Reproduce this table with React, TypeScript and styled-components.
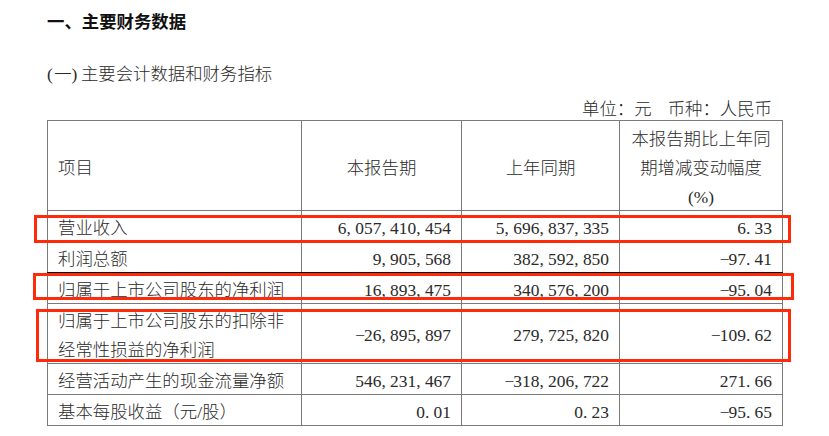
import React from "react";
import styled, { createGlobalStyle } from "styled-components";

const GlobalStyle = createGlobalStyle`
  html, body { margin: 0; padding: 0; background: #fff; }
  body {
    font-family: "Noto Sans CJK SC", sans-serif;
    font-weight: 300;
    color: #2a2a2a;
  }
`;

const Page = styled.div`
  width: 829px;
  height: 436px;
  box-sizing: border-box;
  padding-left: 47px;
  overflow: hidden;
  font-size: 17.4px;
`;

const Title = styled.h1`
  margin: 0;
  font-weight: 700;
  font-size: 17.4px;
  line-height: 42px;
  color: #111;
`;

const Subtitle = styled.div`
  margin-top: 16px;
  line-height: 30px;
`;

const Unit = styled.div`
  margin-top: 8px;
  width: 725px;
  height: 24px;
  line-height: 24px;
  display: flex;
  justify-content: flex-end;
  gap: 16px;
`;

const Latin = styled.span<{ $ls?: number }>`
  font-family: "Liberation Serif", serif;
  font-weight: 400;
  line-height: 1;
  letter-spacing: ${(p) => p.$ls ?? 0}em;
`;

const TableWrap = styled.div`
  position: relative;
  width: 736px;
`;

const Table = styled.table`
  border-collapse: collapse;
  table-layout: fixed;
  width: 736px;
`;

const Cell = styled.td<{ $align?: string; $darkBottom?: boolean; $lh?: number; $middle?: boolean }>`
  border: 1px solid #7a7a7a;
  ${(p) => (p.$darkBottom ? "border-bottom-color: #000;" : "")}
  padding: 2px 10px 0 10px;
  line-height: ${(p) => p.$lh ?? 28}px;
  text-align: ${(p) => p.$align || "left"};
  vertical-align: ${(p) => (p.$middle ? "middle" : "top")};
  white-space: nowrap;
`;

const HeadCell = styled(Cell)`
  padding: 2px 8px 0 8px;
  vertical-align: middle;
`;

const Mark = styled.div<{ $l: number; $t: number; $w: number; $h: number }>`
  position: absolute;
  left: ${(p) => p.$l}px;
  top: ${(p) => p.$t}px;
  width: ${(p) => p.$w}px;
  height: ${(p) => p.$h}px;
  box-sizing: border-box;
  border: 3px solid #ff2a0a;
  pointer-events: none;
`;

// Numbers drawn in SimSun-like half-width cells: every glyph takes 0.5em.
const Num: React.FC<{ v: string }> = ({ v }) => (
  <Latin>
    {v.split("").map((c, i) =>
      /[0-9]/.test(c) ? (
        c
      ) : c === "-" ? (
        <Latin key={i} $ls={-0.064}>
          −
        </Latin>
      ) : (
        <Latin key={i} $ls={0.25}>
          {c}
        </Latin>
      )
    )}
  </Latin>
);

type Row = {
  label: React.ReactNode;
  a: string;
  b: string;
  c: string;
  darkBottom?: boolean;
  tall?: boolean;
};

const rows: Row[] = [
  { label: "营业收入", a: "6,057,410,454", b: "5,696,837,335", c: "6.33" },
  { label: "利润总额", a: "9,905,568", b: "382,592,850", c: "-97.41", darkBottom: true },
  { label: "归属于上市公司股东的净利润", a: "16,893,475", b: "340,576,200", c: "-95.04" },
  {
    label: (
      <>
        归属于上市公司股东的扣除非
        <br />
        经常性损益的净利润
      </>
    ),
    a: "-26,895,897",
    b: "279,725,820",
    c: "-109.62",
    tall: true,
  },
  { label: "经营活动产生的现金流量净额", a: "546,231,467", b: "-318,206,722", c: "271.66" },
  {
    label: (
      <>
        基本每股收益（元<Latin>/</Latin>股）
      </>
    ),
    a: "0.01",
    b: "0.23",
    c: "-95.65",
  },
];

export default function App() {
  return (
    <Page>
      <GlobalStyle />
      <Title>一、主要财务数据</Title>
      <Subtitle>
        <Latin $ls={0.08}>(</Latin>一<Latin $ls={0.2}>)</Latin>主要会计数据和财务指标
      </Subtitle>
      <Unit>
        <span>单位：元</span>
        <span>币种：人民币</span>
      </Unit>
      <TableWrap>
        <Table>
          <colgroup>
            <col style={{ width: 254 }} />
            <col style={{ width: 160 }} />
            <col style={{ width: 158 }} />
            <col style={{ width: 163 }} />
          </colgroup>
          <tbody>
            <tr>
              <HeadCell $lh={29} style={{ paddingLeft: 10 }}>
                项目
              </HeadCell>
              <HeadCell $lh={29} $align="center">
                本报告期
              </HeadCell>
              <HeadCell $lh={29} $align="center">
                上年同期
              </HeadCell>
              <HeadCell $lh={29} $align="center">
                本报告期比上年同
                <br />
                期增减变动幅度
                <br />
                <Latin>(%)</Latin>
              </HeadCell>
            </tr>
            {rows.map((r, i) => {
              const lh = r.tall ? 28.5 : 28;
              return (
                <tr key={i}>
                  <Cell $lh={lh} $darkBottom={r.darkBottom}>
                    {r.label}
                  </Cell>
                  <Cell $lh={lh} $align="right" $darkBottom={r.darkBottom} $middle={r.tall}>
                    <Num v={r.a} />
                  </Cell>
                  <Cell $lh={lh} $align="right" $darkBottom={r.darkBottom} $middle={r.tall}>
                    <Num v={r.b} />
                  </Cell>
                  <Cell $lh={lh} $align="right" $darkBottom={r.darkBottom} $middle={r.tall}>
                    <Num v={r.c} />
                  </Cell>
                </tr>
              );
            })}
          </tbody>
        </Table>
        <Mark $l={-13} $t={95} $w={757} $h={28} />
        <Mark $l={-14} $t={153} $w={761} $h={27} />
        <Mark $l={-11} $t={189} $w={755} $h={53} />
      </TableWrap>
    </Page>
  );
}
